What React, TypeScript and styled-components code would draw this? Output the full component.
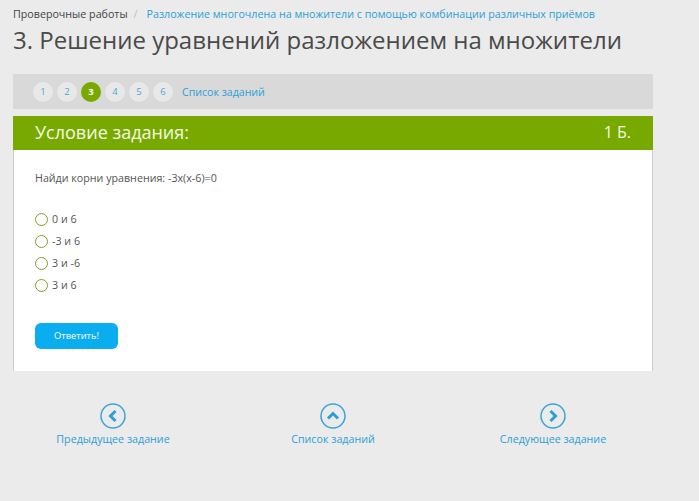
import React from "react";
import styled, { createGlobalStyle } from "styled-components";

const Global = createGlobalStyle`
  html, body { margin: 0; padding: 0; background: #ebebeb; }
  body { font-family: "Open Sans", "Liberation Sans", sans-serif; width: 699px; height: 501px; overflow: hidden; }
`;
const Page = styled.div`
  width: 640px;
  margin-left: 13px;
  padding-top: 6px;
`;
const Breadcrumbs = styled.div`
  display: flex;
  align-items: center;
  height: 16px;
  font-size: 10.7px;
  line-height: 16px;
  color: #444;
  white-space: nowrap;
`;
const Sep = styled.span`
  color: #bbb;
  margin: 0 9px 0 6px;
`;
const Link = styled.span`
  color: #2c9fd6;
`;
const Title = styled.h1`
  margin: 0;
  height: 52px;
  padding-top: 1px;
  box-sizing: border-box;
  font-size: 24px;
  line-height: 34px;
  font-weight: 400;
  color: #4a4a4a;
  white-space: nowrap;
`;
const NavBar = styled.div`
  display: flex;
  align-items: center;
  gap: 4px;
  height: 35px;
  padding-left: 20px;
  background: #d9d9d9;
`;
const Num = styled.span<{ $active?: boolean }>`
  display: flex;
  align-items: center;
  justify-content: center;
  width: 20px;
  height: 20px;
  border-radius: 50%;
  font-size: 9.5px;
  background: ${(p) => (p.$active ? "#77a900" : "#e8e8e8")};
  color: ${(p) => (p.$active ? "#fff" : "#4ba9d8")};
  font-weight: ${(p) => (p.$active ? 700 : 400)};
`;
const NavLink = styled(Link)`
  font-size: 10.6px;
  margin-left: 5px;
`;
const PanelHead = styled.div`
  display: flex;
  justify-content: space-between;
  align-items: center;
  height: 34px;
  margin-top: 7px;
  padding: 0 22px 2px 22px;
  box-sizing: border-box;
  background: #77a900;
  color: #f4fbe0;
  font-size: 18px;
  font-weight: 500;
`;
const Points = styled.span`
  font-size: 16px;
  font-weight: 400;
`;
const PanelBody = styled.div`
  height: 221px;
  box-sizing: border-box;
  background: #fff;
  border-left: 1px solid #ccc;
  border-right: 1px solid #ccc;
  padding: 20px 21px 0;
  font-size: 10.7px;
  color: #555;
`;
const Question = styled.div`
  line-height: 16px;
  margin-bottom: 22px;
`;
const Option = styled.label`
  display: flex;
  align-items: center;
  gap: 4px;
  height: 22px;
`;
const Radio = styled.span`
  width: 11px;
  height: 11px;
  border: 1.5px solid #8a9a2a;
  border-radius: 50%;
`;
const Submit = styled.button`
  display: block;
  width: 83px;
  height: 26px;
  margin-top: 27px;
  padding: 0 0 2px;
  border: 0;
  border-radius: 6px;
  background: #0aaeee;
  color: #fff;
  font: 400 9.3px "Open Sans", sans-serif;
`;
const Footer = styled.div`
  display: grid;
  grid-template-columns: repeat(3, 220px);
  margin-left: -10px;
  padding-top: 32px;
`;
const FootItem = styled.div`
  display: flex;
  flex-direction: column;
  align-items: center;
  gap: 3px;
  font-size: 10.7px;
  color: #2c9fd6;
`;

const Arrow = ({ d }: { d: string }) => (
  <svg width="26" height="26" viewBox="0 0 26 26">
    <circle cx="13" cy="13" r="12" fill="none" stroke="#3aa5d5" strokeWidth="1.5" />
    <path d={d} fill="none" stroke="#2c9fd6" strokeWidth="3" />
  </svg>
);

export default function App() {
  return (
    <Page>
      <Global />
      <Breadcrumbs>
        Проверочные работы<Sep>/</Sep>
        <Link>Разложение многочлена на множители с помощью комбинации различных приёмов</Link>
      </Breadcrumbs>
      <Title>3. Решение уравнений разложением на множители</Title>
      <NavBar>
        {[1, 2, 3, 4, 5, 6].map((n) => (
          <Num key={n} $active={n === 3}>{n}</Num>
        ))}
        <NavLink>Список заданий</NavLink>
      </NavBar>
      <PanelHead>
        <span>Условие задания:</span>
        <Points>1 Б.</Points>
      </PanelHead>
      <PanelBody>
        <Question>Найди корни уравнения: -3x(x-6)=0</Question>
        {["0 и 6", "-3 и 6", "3 и -6", "3 и 6"].map((o) => (
          <Option key={o}>
            <Radio />
            {o}
          </Option>
        ))}
        <Submit>Ответить!</Submit>
      </PanelBody>
      <Footer>
        <FootItem><Arrow d="M15.5 8 L10.5 13 L15.5 18" />Предыдущее задание</FootItem>
        <FootItem><Arrow d="M8 15.5 L13 10.5 L18 15.5" />Список заданий</FootItem>
        <FootItem><Arrow d="M10.5 8 L15.5 13 L10.5 18" />Следующее задание</FootItem>
      </Footer>
    </Page>
  );
}
